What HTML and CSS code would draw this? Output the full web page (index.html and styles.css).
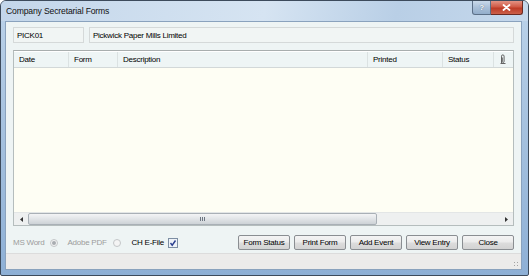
FILE: index.html
```html
<!DOCTYPE html>
<html>
<head>
<meta charset="utf-8">
<link rel="stylesheet" href="styles.css">
</head>
<body>
<div class="window">
  <div class="titlebar">
    <span class="title">Company Secretarial Forms</span>
    <div class="caption-btns">
      <div class="cbtn help">?</div>
      <div class="cbtn close">
        <svg width="9" height="7" viewBox="0 0 9 7"><path d="M1.5 1 L7.5 6 M7.5 1 L1.5 6" stroke="#fff" stroke-width="1.8" stroke-linecap="round"/></svg>
      </div>
    </div>
  </div>
  <div class="client">
    <div class="panel">
      <div class="toprow">
        <div class="field code">PICK01</div>
        <div class="field name">Pickwick Paper Mills Limited</div>
      </div>
      <div class="grid">
        <div class="ghead">
          <div class="col c-date">Date</div>
          <div class="col c-form">Form</div>
          <div class="col c-desc">Description</div>
          <div class="col c-print">Printed</div>
          <div class="col c-status">Status</div>
          <div class="col c-icon">
            <svg width="6" height="10" viewBox="0 0 6 10"><path d="M1.5 9 V2.2 a1.3 1.3 0 0 1 2.6 0 V7.5 a0.9 0.9 0 0 1 -1.8 0 V3.5" fill="none" stroke="#555" stroke-width="0.9"/><path d="M0.5 9.5 h5" stroke="#555" stroke-width="0.9"/></svg>
          </div>
        </div>
        <div class="gbody"></div>
        <div class="hscroll">
          <div class="arrow left"><svg width="3" height="5" viewBox="0 0 3 5"><path d="M3 0 L0 2.5 L3 5z" fill="#333"/></svg></div>
          <div class="track">
            <div class="thumb"><span class="grip"></span></div>
          </div>
          <div class="arrow right"><svg width="3" height="5" viewBox="0 0 3 5"><path d="M0 0 L3 2.5 L0 5z" fill="#333"/></svg></div>
        </div>
      </div>
      <div class="bottomrow">
        <div class="opts">
          <span class="lbl dis">MS Word</span><span class="radio on"></span>
          <span class="lbl dis">Adobe PDF</span><span class="radio"></span>
          <span class="lbl efile">CH E-File</span><span class="check"><svg width="8" height="8" viewBox="0 0 8 8"><path d="M1.5 4 L3.2 6.2 L6.5 1.5" fill="none" stroke="#2a3f8f" stroke-width="1.4"/></svg></span>
        </div>
        <div class="btns">
          <button class="btn">Form Status</button>
          <button class="btn">Print Form</button>
          <button class="btn">Add Event</button>
          <button class="btn">View Entry</button>
          <button class="btn">Close</button>
        </div>
      </div>
    </div>
    <div class="status"><span class="sizegrip"></span></div>
  </div>
</div>
</body>
</html>
```
FILE: styles.css
```css
html, body {
  margin: 0;
  padding: 0;
  background: #ffffff;
}
body {
  font-family: "Liberation Sans", Arial, sans-serif;
  font-size: 8px;
  letter-spacing: -0.25px;
  color: #000;
}
.window {
  width: 529px;
  height: 276px;
  box-sizing: border-box;
  border: 1px solid #3d4b5c;
  border-radius: 6px 6px 2px 2px;
  background: linear-gradient(180deg, #bcd3ea 0%, #a9c4e0 40%, #8eb0d6 100%);
  display: flex;
  flex-direction: column;
  overflow: hidden;
}
.titlebar {
  height: 20px;
  display: flex;
  align-items: flex-start;
  justify-content: space-between;
  background: linear-gradient(100deg, #c3d6ea 0%, #d6e4f2 50%, #b9cfe6 75%, #c5d8ec 100%);
}
.title {
  padding: 5px 0 0 5px;
  font-size: 8.6px;
  letter-spacing: -0.15px;
  color: #111;
}
.caption-btns {
  display: flex;
  margin-right: 5px;
}
.cbtn {
  height: 14px;
  box-sizing: border-box;
  border: 1px solid #5b6f87;
  border-top: none;
  display: flex;
  align-items: center;
  justify-content: center;
  color: #fff;
  font-weight: bold;
  font-size: 8px;
}
.help {
  width: 19px;
  border-radius: 0 0 0 3px;
  background: linear-gradient(180deg, #c9d9ea 0%, #a9bfd8 50%, #93aecb 100%);
  color: #fff;
  text-shadow: 0 0 1px #3d5270;
}
.close {
  width: 32px;
  border-left: none;
  border-color: #6b2a22;
  border-radius: 0 0 3px 0;
  background: linear-gradient(180deg, #e39384 0%, #d05a46 45%, #bd3b26 55%, #cb604a 100%);
}
.client {
  flex: 1;
  margin: 0 6px 5px 4px;
  border: 1px solid #8aa2bd;
  display: flex;
  flex-direction: column;
  background: #ecebea;
}
.panel {
  flex: 1;
  background: #eef4f4;
  padding: 5px 7px 0 7px;
  display: flex;
  flex-direction: column;
}
.toprow {
  display: flex;
  gap: 5px;
}
.field {
  height: 16px;
  box-sizing: border-box;
  border: 1px solid #d5d9d9;
  background: #f1f5f4;
  padding: 2px 0 0 3px;
  line-height: 11px;
  color: #000;
}
.code { width: 71px; }
.name { flex: 1; }
.grid {
  margin-top: 7px;
  height: 176px;
  box-sizing: border-box;
  border: 1px solid #b5bdbd;
  border-top-color: #a8aeae;
  background: #fefef4;
  display: flex;
  flex-direction: column;
}
.ghead {
  height: 15px;
  display: flex;
  background: #eef5f5;
  border-bottom: 1px solid #d2d8d8;
  border-top: 1px solid #fff;
}
.col {
  box-sizing: border-box;
  padding: 2px 0 0 5px;
  line-height: 11px;
  border-right: 1px solid #dbe2e2;
  color: #000;
}
.c-date { width: 55px; }
.c-form { width: 49px; }
.c-desc { width: 250px; }
.c-print { width: 75px; }
.c-status { width: 51px; }
.c-icon { flex: 1; border-right: none; padding: 2px 0 0 6px; }
.gbody { flex: 1; }
.hscroll {
  height: 12px;
  display: flex;
  background: #eef0f0;
  border-top: 1px solid #e3e6e6;
}
.arrow {
  width: 14px;
  display: flex;
  align-items: center;
  justify-content: center;
}
.track {
  flex: 1;
  display: flex;
  padding: 0;
}
.thumb {
  width: 349px;
  box-sizing: border-box;
  border: 1px solid #a9b0b6;
  border-radius: 2px;
  background: linear-gradient(180deg, #f3f4f5 0%, #e1e4e7 50%, #cdd2d6 100%);
  display: flex;
  align-items: center;
  justify-content: center;
}
.grip {
  width: 5px;
  height: 4px;
  background: repeating-linear-gradient(90deg, #6d7681 0 1px, transparent 1px 2px);
}
.bottomrow {
  display: flex;
  justify-content: space-between;
  align-items: center;
  margin-top: 9px;
}
.opts {
  display: flex;
  align-items: center;
  padding-left: 0;
}
.lbl { margin-right: 6px; white-space: nowrap; }
.lbl.dis { color: #9c9c9c; }
.radio {
  width: 6px;
  height: 6px;
  border-radius: 50%;
  border: 1px solid #c3c6c8;
  background: #f4f4f4;
  margin-right: 9px;
  display: flex;
  align-items: center;
  justify-content: center;
}
.radio.on::after {
  content: "";
  width: 4px;
  height: 4px;
  border-radius: 50%;
  background: #a8acb0;
}
.efile { margin-left: 2px; margin-right: 4px; color: #000; }
.check {
  width: 8px;
  height: 8px;
  border: 1px solid #7d8ea3;
  background: #eef2f8;
  display: flex;
  align-items: center;
  justify-content: center;
}
.btns {
  display: flex;
  gap: 4px;
}
.btn {
  font-family: inherit;
  font-size: 8px;
  letter-spacing: -0.25px;
  height: 15px;
  width: 52px;
  padding: 0;
  white-space: nowrap;
  border: 1px solid #8a8e92;
  border-radius: 2px;
  background: linear-gradient(180deg, #f4f4f4 0%, #ececec 45%, #dcdcdc 55%, #d3d3d3 100%);
  color: #000;
}
.status {
  height: 15px;
  border-top: 1px solid #dcdcdc;
  display: flex;
  justify-content: flex-end;
  align-items: flex-end;
}
.sizegrip {
  width: 7px;
  height: 7px;
  margin: 0 1px 1px 0;
  background: radial-gradient(circle, #a3a3a3 0.8px, transparent 1px) 0 0 / 3px 3px;
}
```
